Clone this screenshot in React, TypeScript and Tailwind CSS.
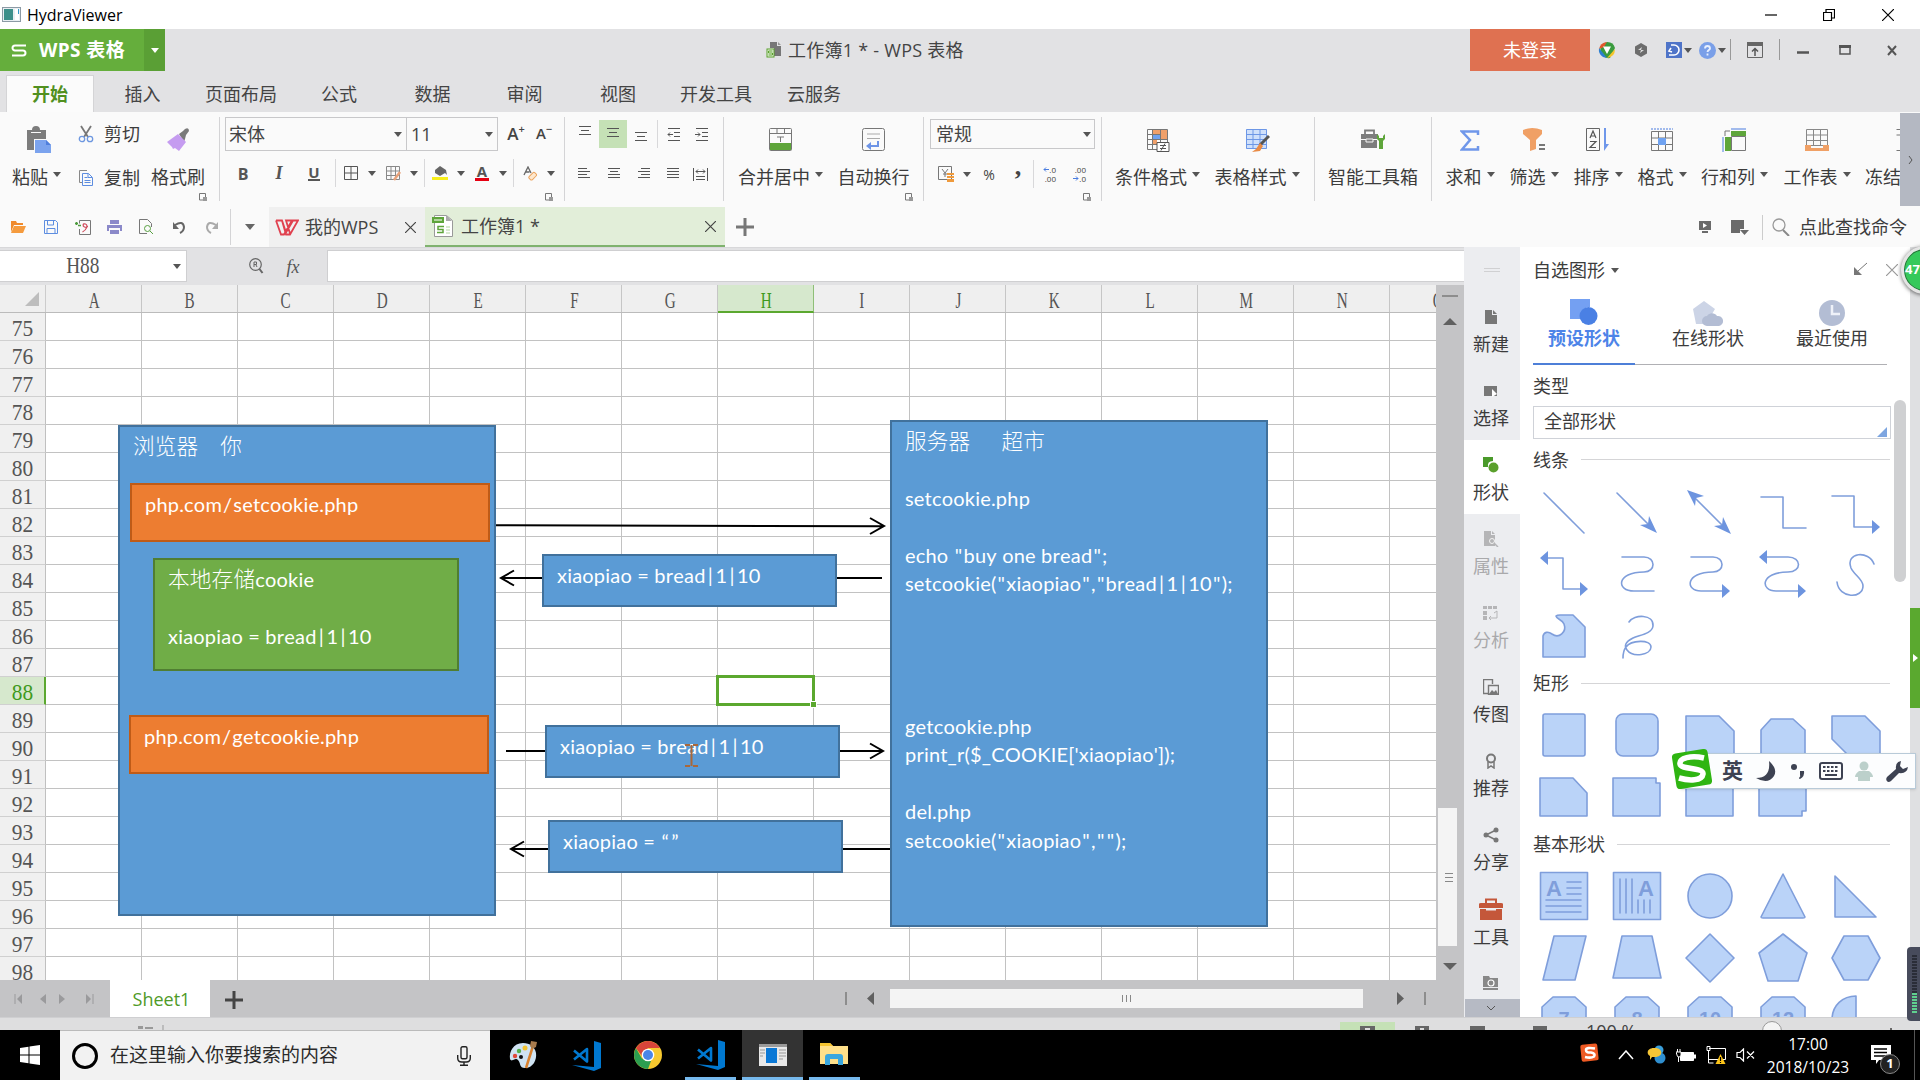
import React from "react";

type Kids = { children?: React.ReactNode };

const UI = "font-['Open_Sans','Noto_Sans_CJK_SC',sans-serif]";

/* ---------- helpers ---------- */

function Svg({ w, h, vb, className = "", children }: Kids & { w: number; h: number; vb?: string; className?: string }) {
  return (
    <svg width={w} height={h} viewBox={vb ?? `0 0 ${w} ${h}`} fill="none" className={`shrink-0 ${className}`}>
      {children}
    </svg>
  );
}

function Cell({ className = "", children }: Kids & { className?: string }) {
  return <div className={`flex h-full shrink-0 items-center justify-center ${className}`}>{children}</div>;
}

function Caret({ className = "text-[#555]" }: { className?: string }) {
  return (
    <Svg w={8} h={5} className={className}>
      <path d="M0 0h8L4 5z" fill="currentColor" />
    </Svg>
  );
}

function Sep() {
  return <div className="mt-[5px] h-[84px] w-px shrink-0 bg-[#d4d4d6]" />;
}

function Launcher() {
  return (
    <Svg w={8} h={8}>
      <path d="M4 7H.5V.5h6V4" stroke="#777" />
      <path d="M4 4h4v4H4z" fill="#999" />
    </Svg>
  );
}

function BigButton({ label, icon, caret, className = "" }: { label: string; icon: React.ReactNode; caret?: boolean; className?: string }) {
  return (
    <div className={`flex shrink-0 flex-col items-center ${className}`}>
      <div className="mt-[14px] flex h-7 items-center justify-center">{icon}</div>
      <div className="mt-[11px] flex h-6 items-center gap-[5px] text-lg leading-6 whitespace-nowrap text-[#3c3c3c]">
        {label}
        {caret && <span className="-mt-1.5"><Caret /></span>}
      </div>
    </div>
  );
}

/* ---------- window chrome ---------- */

function TitleBar() {
  return (
    <div className="flex h-[29px] items-center bg-white">
      <Svg w={19} h={15} className="ml-[2px]">
        <rect x=".5" y=".5" width="18" height="14" fill="#e9eef2" stroke="#8c9aa5" />
        <rect x="2" y="2" width="9" height="11" fill="#3d8f8a" />
        <rect x="13" y="2" width="4" height="11" fill="#fff" />
        <path d="M16.500 2v5" stroke="#39c" />
      </Svg>
      <span className="ml-[6px] flex-1 text-[16px] tracking-[0px] text-black">HydraViewer</span>
      <Cell className="w-[58px]"><Svg w={12} h={2}><path d="M0 1h12" stroke="#000" strokeWidth="1.200" /></Svg></Cell>
      <Cell className="w-[58px]">
        <Svg w={12} h={12}><path d="M.5 3.500h8v8h-8zM3 3V.5h8.500V9H9" stroke="#000" strokeWidth="1.200" /></Svg>
      </Cell>
      <Cell className="mr-[2px] w-[60px]"><Svg w={12} h={12}><path d="M0 0l12 12M12 0L0 12" stroke="#000" strokeWidth="1.200" /></Svg></Cell>
    </div>
  );
}

function BrandBar() {
  return (
    <div className="flex h-[42px] bg-[#e2e2e4]">
      <div className="flex w-[144px] items-center bg-[#65ae3c] text-white">
        <Svg w={16} h={13} className="ml-[11px]">
          <path d="M15 1.500H4a2.500 2.500 0 000 5h8a2.500 2.500 0 010 5H1" stroke="#fff" strokeWidth="2" />
        </Svg>
        <span className="ml-3 text-[19px] font-bold tracking-[0.4px] whitespace-nowrap">WPS 表格</span>
      </div>
      <div className="flex w-[21px] items-center justify-center bg-[#5a9f35]"><Caret className="text-white" /></div>
      <div className="flex flex-1 items-center pl-[601px] text-lg text-[#444]">
        <Svg w={16} h={16}>
          <path d="M4 0h7v4h4v10H8V6H4z" fill="#777" />
          <path d="M12 0l3 3h-3z" fill="#999" />
          <rect x="1" y="7" width="7" height="8" fill="#e8f4e0" stroke="#5aa02c" />
          <path d="M6.500 9h-4v2h4v2h-4" stroke="#5aa02c" />
        </Svg>
        <span className="ml-[6px] tracking-[0.25px] whitespace-nowrap">工作簿1 * - WPS 表格</span>
      </div>
      <div className="flex w-[120px] items-center justify-center bg-[#df7151] text-lg text-white">未登录</div>
      <Cell className="w-[34px]">
        <Svg w={18} h={18}>
          <path d="M9 1a8 8 0 018 6l-5 10A8 8 0 019 1z" fill="#3a9b3e" />
          <path d="M1 8q1-6 8-7L6 6z" fill="#e2582d" />
          <path d="M1 7l8 10-4-1Q0 13 1 7z" fill="#2b7fd0" />
          <path d="M9 17l8-9q0 8-8 9z" fill="#f4c52c" />
          <path d="M5 5.500h8L9 13z" fill="#fff" />
        </Svg>
      </Cell>
      <Cell className="w-[34px]">
        <Svg w={12} h={14}><path d="M6 0l6 3.500v7L6 14l-6-3.500v-7z" fill="#6d6d6d" /><path d="M3 7l4-3-1 3h3l-4 3 1-3z" fill="#ddd" /></Svg>
      </Cell>
      <Cell className="ml-[5px] w-[32px] gap-[2px]">
        <Svg w={16} h={16}>
          <rect width="16" height="16" fill="#4f74c8" />
          <path d="M5 3h3a5 5 0 010 10H3M5 6l-2 3 3 1" stroke="#fff" strokeWidth="1.600" />
        </Svg>
        <Caret />
      </Cell>
      <Cell className="w-[34px] gap-[2px]">
        <Svg w={17} h={17}>
          <circle cx="8.500" cy="8.500" r="8.500" fill="#7a9fe8" />
          <path d="M6 6.500a2.500 2.500 0 115 0c0 1.500-2.500 1.700-2.500 3.500M8.500 11.500v2" stroke="#e8f0ff" strokeWidth="1.800" />
        </Svg>
        <Caret />
      </Cell>
      <div className="mt-[10px] ml-[1px] h-[21px] w-px bg-[#999]" />
      <Cell className="w-[48px]">
        <Svg w={16} h={16}><path d="M.5.5h15v15H.5z" stroke="#666" /><path d="M0 0h16v4H0z" fill="#666" /><path d="M8 14V7M5 9.500l3-3 3 3" stroke="#555" strokeWidth="1.500" /></Svg>
      </Cell>
      <div className="mt-[10px] h-[21px] w-px bg-[#999]" />
      <Cell className="w-[46px]"><Svg w={12} h={3} className="mt-1"><path d="M0 1.500h12" stroke="#555" strokeWidth="2.500" /></Svg></Cell>
      <Cell className="w-[37px]"><Svg w={12} h={10}><path d="M1 1h10v8H1z" stroke="#555" strokeWidth="1.500" /><path d="M0 0h12v3H0z" fill="#555" /></Svg></Cell>
      <Cell className="w-[57px] pl-px"><Svg w={10} h={11}><path d="M1 1l8 9M9 1l-8 9" stroke="#555" strokeWidth="2" /></Svg></Cell>
    </div>
  );
}

function MenuTabs() {
  const tabs: [string, string][] = [
    ["插入", "w-[97px]"], ["页面布局", "w-[100px]"], ["公式", "w-[96px]"], ["数据", "w-[91px]"],
    ["审阅", "w-[93px]"], ["视图", "w-[94px]"], ["开发工具", "w-[102px]"], ["云服务", "w-[94px]"],
  ];
  return (
    <div className="flex h-[41px] bg-[#e2e2e4] pt-1 pl-[6px] text-lg text-[#444]">
      <div className="flex w-[88px] items-center justify-center border border-b-0 border-[#d4d4d6] bg-[#fbfbfb] font-bold text-[#51901f]">开始</div>
      {tabs.map(([t, w]) => (
        <div key={t} className={`flex items-center justify-center pt-px whitespace-nowrap ${w}`}>{t}</div>
      ))}
    </div>
  );
}

/* ---------- ribbon ---------- */

function Lines({ widths, align = "l", gap = 4 }: { widths: number[]; align?: "l" | "c" | "r"; gap?: number }) {
  const h = widths.length * gap;
  return (
    <Svg w={12} h={h}>
      {widths.map((w, i) => {
        const x = align === "l" ? 0 : align === "c" ? (12 - w) / 2 : 12 - w;
        return <path key={i} d={`M${x} ${i * gap + 0.5}h${w}`} stroke="#555" />;
      })}
    </Svg>
  );
}

function Indent({ right }: { right?: boolean }) {
  return (
    <Svg w={14} h={13}>
      <path d="M1 .5h12M7 4.500h6M7 8.500h6M1 12.500h12" stroke="#555" />
      <path d={right ? "M0 6.500h5M3 4.500l2 2-2 2" : "M6 6.500H1M3 4.500l-2 2 2 2"} stroke="#555" />
    </Svg>
  );
}

function PasteIcon() {
  return (
    <Svg w={24} h={28} className="ml-1">
      <path d="M0 4h5a4 4 0 018 0h6v9H7v11H0z" fill="#7c7c7c" />
      <path d="M4 6.500h10" stroke="#fafafa" />
      <path d="M8 14h11l5 5v8H8z" fill="#7ba3ee" />
      <path d="M19 14v5h5z" fill="#4f7fdd" />
    </Svg>
  );
}

function BrushIcon() {
  return (
    <Svg w={24} h={24}>
      <path d="M13 6l4-3 2-2q4-2 4 2l-3 4-1 4-1 3z" fill="#7a7a7a" />
      <path d="M12 6l8 8-7 9-4-3-2 1-1-2-5-5z" fill="#c59cf0" />
    </Svg>
  );
}

function TableIcon({ children }: Kids) {
  return (
    <Svg w={24} h={24}>
      <path d="M1.500 1.500h20v20h-20zM1.500 6.500h20M1.500 11.500h20M1.500 16.500h20M6.500 1.500v20M14.500 1.500v20" stroke="#777" />
      {children}
    </Svg>
  );
}

function Ribbon() {
  return (
    <div className="flex h-[92px] bg-[#fafafa]">
      {/* clipboard */}
      <div className="flex w-[219px] shrink-0">
        <BigButton className="w-[72px] pl-px" label="粘贴" caret icon={<PasteIcon />} />
        <div className="w-[72px] pt-2 text-lg text-[#3c3c3c]">
          <div className="flex h-7 items-center pl-[6px]">
            <Svg w={16} h={18}>
              <path d="M3 1l7 11M13 1L6 12" stroke="#777" strokeWidth="1.800" />
              <circle cx="4" cy="14" r="2.700" stroke="#6d97e0" strokeWidth="1.300" />
              <circle cx="12" cy="14" r="2.700" stroke="#6d97e0" strokeWidth="1.300" />
            </Svg>
            <span className="ml-[10px] whitespace-nowrap">剪切</span>
          </div>
          <div className="mt-[16px] flex h-7 items-center pl-[6px]">
            <Svg w={16} h={18}>
              <path d="M9 1.500H1.500v12H4" stroke="#888" />
              <path d="M4.500 4.500h6l4 4v8h-10zM10 4.500v4h4M6.500 8.500h3M6.500 11.500h6M6.500 13.500h6" stroke="#5d8de0" />
            </Svg>
            <span className="ml-[10px] whitespace-nowrap">复制</span>
          </div>
        </div>
        <div className="w-[75px]">
          <BigButton className="w-[68px]" label="格式刷" icon={<BrushIcon />} />
          <div className="mt-1 flex justify-end pr-3"><Launcher /></div>
        </div>
      </div>
      <Sep />
      {/* font */}
      <div className="w-[344px] shrink-0 pt-[5px]">
        <div className="flex h-[34px] pl-[5px] text-lg text-[#444]">
          <div className="flex w-[182px] items-center justify-between border border-[#c8c8ca] pr-1 pl-[3px]">宋体<Caret /></div>
          <div className="-ml-px flex w-[92px] items-center justify-between border border-[#c8c8ca] pr-1 pl-1">11<Caret /></div>
          <Cell className="ml-[4px] w-7 items-center text-[17px] font-semibold">A<sup className="text-[11px]">+</sup></Cell>
          <Cell className="w-7 text-[15px] font-semibold">A<sup className="text-[11px]">−</sup></Cell>
        </div>
        <div className="mt-[8px] flex h-7 items-center pl-[5px] text-[#555]">
          <Cell className="w-9 pt-px text-[16px] font-bold">B</Cell>
          <Cell className="w-9 pt-px font-['Liberation_Serif',serif] text-[18px] font-bold italic">I</Cell>
          <Cell className="w-[34px] text-[15px] font-bold"><span className="border-b-2 border-[#555] leading-[14px]">U</span></Cell>
          <div className="ml-1 h-full w-px bg-[#d8d8da]" />
          <Cell className="w-[30px]"><Svg w={14} h={14}><path d="M.5.5h13v13H.5zM7 0v14M0 7h14" stroke="#555" /></Svg></Cell>
          <Cell className="w-3"><Caret /></Cell>
          <Cell className="w-[30px]">
            <Svg w={15} h={15}>
              <path d="M.5.5h13v13H.5zM5 0v14M9.500 0v14M0 5h14M0 9.500h14" stroke="#888" />
              <path d="M14 6l-6 8" stroke="#e8a27a" strokeWidth="2.500" />
            </Svg>
          </Cell>
          <Cell className="w-3"><Caret /></Cell>
          <div className="ml-1 h-full w-px bg-[#d8d8da]" />
          <Cell className="w-[30px]">
            <Svg w={17} h={16}>
              <path d="M3 5l5-4 6 4 1 5-2-2-5 3-5-3z" fill="#666" />
              <path d="M0 12h16v3H0z" fill="#f7ee1b" />
            </Svg>
          </Cell>
          <Cell className="w-3"><Caret /></Cell>
          <Cell className="w-[30px]"><span className="border-b-[3px] border-[#e60012] px-[2px] text-[15px] leading-[13px] font-bold">A</span></Cell>
          <Cell className="w-3"><Caret /></Cell>
          <div className="ml-1 h-full w-px bg-[#d8d8da]" />
          <Cell className="w-8">
            <Svg w={15} h={15}>
              <path d="M1 9l4-8 3 6M2.500 6h4" stroke="#666" strokeWidth="1.300" />
              <rect x="5.500" y="8" width="8" height="4.500" rx="1.500" transform="rotate(-45 9.500 10)" fill="#fde8cf" stroke="#eca35c" />
            </Svg>
          </Cell>
          <Cell className="w-[10px]"><Caret /></Cell>
        </div>
        <div className="mt-[6px] flex justify-end pr-[11px]"><Launcher /></div>
      </div>
      <Sep />
      {/* alignment */}
      <div className="w-[158px] shrink-0 pt-2">
        <div className="flex h-7 pl-[6px]">
          <Cell className="w-7 pb-1"><Lines widths={[12, 8, 12]} align="c" /></Cell>
          <Cell className="w-7 bg-[#c5e1b6]"><Lines widths={[12, 8, 12]} align="c" /></Cell>
          <Cell className="w-7 pt-2"><Lines widths={[12, 8, 12]} align="c" /></Cell>
          <div className="ml-[2px] h-full w-px bg-[#d8d8da]" />
          <Cell className="w-8"><Indent /></Cell>
          <Cell className="w-6"><Indent right /></Cell>
        </div>
        <div className="mt-3 flex h-7 pl-1">
          <Cell className="w-[30px]"><Lines widths={[9, 12, 9, 12]} gap={3} /></Cell>
          <Cell className="w-[30px]"><Lines widths={[12, 8, 12, 12]} gap={3} align="c" /></Cell>
          <Cell className="w-[30px]"><Lines widths={[9, 12, 9, 12]} gap={3} align="r" /></Cell>
          <Cell className="w-7"><Lines widths={[12, 12, 12, 12]} gap={3} /></Cell>
          <Cell className="w-[30px] pr-[3px]">
            <Svg w={15} h={13}><path d="M.5 0v13M14.500 0v13M3 3.500h9M5 1.500l-2 2 2 2M10 1.500l2 2-2 2M3 8.500h9M3 11.500h9" stroke="#555" /></Svg>
          </Cell>
        </div>
      </div>
      <Sep />
      {/* merge & wrap */}
      <div className="w-[199px] shrink-0">
        <div className="flex pl-2">
          <BigButton
            className="w-24 pl-px"
            label="合并居中"
            caret
            icon={
              <Svg w={24} h={24}>
                <rect x=".5" y=".5" width="22" height="22" rx="1" stroke="#777" />
                <path d="M0 5.500h23M8 0v5M15.500 0v5M8 9h7M11.500 9v5" stroke="#777" />
                <path d="M1 15h21v7H1z" fill="#5ea53a" />
              </Svg>
            }
          />
          <BigButton
            className="w-[91px]"
            label="自动换行"
            icon={
              <Svg w={24} h={24}>
                <rect x=".5" y=".5" width="22" height="22" rx="2" stroke="#777" />
                <path d="M5 6h13M5 10.500h13" stroke="#aaa" />
                <path d="M16 13v5H7" stroke="#6d94e6" strokeWidth="2" />
                <path d="M9 14v8l-5-4z" fill="#6d94e6" />
              </Svg>
            }
          />
        </div>
        <div className="mt-1 flex justify-end pr-[10px]"><Launcher /></div>
      </div>
      <Sep />
      {/* number */}
      <div className="w-[177px] shrink-0 pt-[7px]">
        <div className="ml-[6px] flex h-[30px] w-[165px] items-center justify-between border border-[#c8c8ca] pr-[3px] pl-[5px] text-lg text-[#444]">常规<Caret /></div>
        <div className="mt-[11px] flex h-7 pl-[6px] text-[#444]">
          <Cell className="w-8">
            <Svg w={17} h={16}>
              <path d="M.5.5h13v13H.5z" stroke="#777" />
              <path d="M4 3l3 4 3-4M7 7v4M5 8h4" stroke="#777" />
              <path d="M9 7h7v2H9zM9 10h7v2H9zM9 13h7v3H9z" fill="#ef9a3c" />
            </Svg>
          </Cell>
          <Cell className="w-[10px]"><Caret /></Cell>
          <Cell className="ml-[2px] w-[30px] text-[14px]">%</Cell>
          <Cell className="w-7 pb-4 font-['Liberation_Serif',serif] text-[26px] font-bold">,</Cell>
          <div className="ml-px h-full w-px bg-[#d8d8da]" />
          <Cell className="w-[30px] flex-col items-end pr-[8px] text-[8px] leading-[9px]">
            <span className="flex items-center"><Svg w={6} h={5}><path d="M6 2.500H1M3 .5l-2 2 2 2" stroke="#4a7de0" /></Svg>.0</span>
            <span>.00</span>
          </Cell>
          <Cell className="w-[30px] flex-col items-end pr-[8px] text-[8px] leading-[9px]">
            <span>.00</span>
            <span className="flex items-center"><Svg w={6} h={5}><path d="M0 2.500h5M3 .5l2 2-2 2" stroke="#4a7de0" /></Svg>.0</span>
          </Cell>
        </div>
        <div className="mt-[5px] flex justify-end pr-[10px]"><Launcher /></div>
      </div>
      <Sep />
      {/* styles */}
      <div className="flex w-[212px] shrink-0 pl-[5px]">
        <BigButton
          className="w-[100px] pl-px"
          label="条件格式"
          caret
          icon={
            <TableIcon>
              <path d="M7 2h7v4H7zM7 12h4v4H7z" fill="#f0a06a" />
              <path d="M15 2h6v9h-6z" fill="#f0a06a" />
              <path d="M7 7h7v4H7z" fill="#6fa2f0" />
              <path d="M11 14.500h12v9H11z" fill="#fff" stroke="#555" />
              <path d="M14 17.500h6M14 20.500h6M19 15.500l-4 7" stroke="#555" />
            </TableIcon>
          }
        />
        <BigButton
          className="w-[100px]"
          label="表格样式"
          caret
          icon={
            <Svg w={25} h={24}>
              <path d="M1 1h21v20H1z" fill="#cfe0fb" />
              <path d="M1.500 1.500h20v19h-20zM1.500 6.500h20M1.500 11.500h20M1.500 16.500h20M8 1.500v19M15 1.500v19" stroke="#6d97e6" />
              <path d="M24 8l-9 9" stroke="#555" strokeWidth="3" />
              <path d="M15 15l3 3-3 5-8 1 4-3z" fill="#e98b45" />
            </Svg>
          }
        />
      </div>
      <Sep />
      <BigButton
        className="w-[116px]"
        label="智能工具箱"
        icon={
          <Svg w={25} h={24}>
            <path d="M4 6V2.500h9V6" stroke="#7d7d7d" strokeWidth="1.800" />
            <path d="M0 6h17v5H0zM0 12h16v8H0z" fill="#7d7d7d" />
            <path d="M5 11h7v3H5z" fill="#7d7d7d" stroke="#fafafa" />
            <path d="M16 6v5l2 2v8h4v-8l2-2V6l-2 2v2h-4V8z" fill="#5ea53a" />
          </Svg>
        }
      />
      <Sep />
      {/* data */}
      <div className="flex min-w-0 flex-1 overflow-hidden pl-[6px]">
        <BigButton className="w-16" label="求和" caret icon={<Svg w={20} h={21}><path d="M18 5V1.500H2L10 10 2 19.500h16V16" stroke="#6f97ea" strokeWidth="2.500" /></Svg>} />
        <BigButton
          className="w-16"
          label="筛选"
          caret
          icon={<Svg w={23} h={24}><path d="M0 2q9-4 19 0v4l-6 6v9l-6 2V12L0 6z" fill="#f0a065" /><path d="M16 17h6M16 21h6" stroke="#777" strokeWidth="2" /></Svg>}
        />
        <BigButton
          className="w-16"
          label="排序"
          caret
          icon={
            <Svg w={24} h={24}>
              <path d="M.5.5h13v22H.5z" stroke="#666" />
              <path d="M4 10l3-7 3 7M5 8h4M4 13.500h6l-6 6h6" stroke="#555" strokeWidth="1.200" />
              <path d="M19 0v18" stroke="#6f97ea" strokeWidth="2" /><path d="M18 16h5l-5 7z" fill="#6f97ea" />
            </Svg>
          }
        />
        <BigButton
          className="w-16"
          label="格式"
          caret
          icon={
            <Svg w={22} h={24}>
              <path d="M0 1h22" stroke="#4a7de0" strokeDasharray="2 1" />
              <path d="M.5 3.500h21v19H.5zM.5 10h21M.5 16.500h21M7.500 3.500v19M14.500 3.500v19" stroke="#777" />
              <path d="M7 10h8v7H7z" fill="#6fa2f0" />
            </Svg>
          }
        />
        <BigButton
          className="w-[81px]"
          label="行和列"
          caret
          icon={
            <Svg w={25} h={24}>
              <path d="M9 1h15M1 9v15" stroke="#4a7de0" /><path d="M9 3h15v5H9zM3 9h6v14H3z" fill="#5ea53a" />
              <path d="M9.500 8.500h14v14h-14z" stroke="#777" /><path d="M3 8V3h5" stroke="#777" />
            </Svg>
          }
        />
        <BigButton
          className="w-[84px]"
          label="工作表"
          caret
          icon={
            <Svg w={24} h={24}>
              <path d="M1.500 1.500h21v16h-21zM1.500 7h21M1.500 12.500h21M8.500 1.500v16M15.500 1.500v16" stroke="#888" />
              <path d="M0 17h6v3h12v-3h6v6H0z" fill="#f0a065" />
            </Svg>
          }
        />
        <BigButton
          className="ml-[6px] w-[72px]"
          label="冻结窗格"
          icon={<Svg w={24} h={24}><path d="M7.500 1.500h16v21h-16M7.500 7h16" stroke="#777" /></Svg>}
        />
      </div>
      <div className="mt-px -mb-[2px] flex w-5 shrink-0 items-center justify-center bg-[#b4b8c2] text-[#555]">
        <Svg w={5} h={8}><path d="M1 0l3 4-3 4" stroke="#555" /></Svg>
      </div>
    </div>
  );
}

/* ---------- document tabs ---------- */

function X({ s = 11, c = "#444" }: { s?: number; c?: string }) {
  return <Svg w={s} h={s}><path d={`M0 0l${s} ${s}M${s} 0L0 ${s}`} stroke={c} strokeWidth="1.200" /></Svg>;
}

function DocTabs() {
  return (
    <div className="flex h-[43px] items-center bg-[#fafafa] pt-[3px]">
      <Cell className="ml-[2px] w-8"><Svg w={16} h={12}><path d="M1 0h5l1 2h6v2H4L1 11z" fill="#f08a2c" /><path d="M4 5h12l-3 7H1z" fill="#f59b3e" /></Svg></Cell>
      <Cell className="w-[34px]"><Svg w={14} h={14}><path d="M.5.5h11l2 2v11H.5z" stroke="#5d8de0" /><path d="M3.500 1v4h6V1M3 13.500v-5h8v5" stroke="#5d8de0" /></Svg></Cell>
      <Cell className="w-[30px]">
        <Svg w={16} h={15}><path d="M4.500 3.500v-3h11v14h-11V9" stroke="#777" /><path d="M7.500 12c4-2 6-7 3-8s-3 2-1 3c3 1 3-1 3-1" stroke="#d04a5a" strokeWidth="1.200" /><path d="M0 3.500h3M1.500 2v3" stroke="#4c9a3c" strokeWidth="1.500" /><path d="M3 5.500h3" stroke="#4c9a3c" strokeWidth="1.500" /></Svg>
      </Cell>
      <Cell className="w-[32px]"><Svg w={15} h={14}><path d="M3 0h9v4H3zM0 5h15v6h-2V8H2v3H0zM3 10h9v4H3z" fill="#8b89c9" /></Svg></Cell>
      <Cell className="w-[33px]"><Svg w={15} h={16}><path d="M8 14.500H.5V.5h8l4 4V8" stroke="#777" /><circle cx="8.500" cy="9.500" r="3" stroke="#57a040" /><path d="M11 12l3 3" stroke="#57a040" /></Svg></Cell>
      <Cell className="w-8"><Svg w={13} h={13}><path d="M2 4q8-5 9 2 0 4-4 6" stroke="#666" strokeWidth="2" /><path d="M0 1v7h6z" fill="#666" /></Svg></Cell>
      <Cell className="w-8"><Svg w={13} h={13}><path d="M11 4Q3-1 2 6q0 4 4 6" stroke="#aaa" strokeWidth="2" /><path d="M13 1v7H7z" fill="#aaa" /></Svg></Cell>
      <div className="ml-[3px] h-9 w-px bg-[#d4d4d6]" />
      <Cell className="w-[38px]"><Svg w={10} h={6}><path d="M0 0h10L5 6z" fill="#666" /></Svg></Cell>
      <div className="flex h-full w-[156px] items-center bg-[#f0f0f0] pl-[6px] text-lg text-[#444]">
        <Svg w={24} h={17}>
          <path d="M1 1.500h6l4 12 7-12h5l-8 14h-4L7 1.500M1 1.500l5 14h3L17 1.500h-6l4 13" stroke="#e0414f" strokeWidth="1.800" />
        </Svg>
        <span className="ml-[6px] flex-1 whitespace-nowrap">我的WPS</span>
        <span className="mr-[9px]"><X /></span>
      </div>
      <div className="flex h-full w-[300px] items-center border-b-2 border-[#7fb26e] bg-[#e2eed9] pl-[7px] text-lg text-[#444]">
        <Svg w={21} h={22}>
          <path d="M2.500.5h12l6 5v16h-18z" fill="#fff" stroke="#999" />
          <path d="M14 0v6h6z" fill="#aaa" />
          <path d="M0 2h12v6H0z" fill="#5ea53a" />
          <path d="M2 5h8M14 12h4M14 15h4M14 18h4" stroke="#cde5c0" strokeWidth="1.500" />
          <path d="M12 11.500H6v3h5v3H5" stroke="#5ea53a" strokeWidth="1.500" />
        </Svg>
        <span className="ml-2 flex-1">工作簿1 *</span>
        <span className="mr-[9px]"><X /></span>
      </div>
      <Cell className="w-10"><Svg w={18} h={18}><path d="M9 0v18M0 9h18" stroke="#777" strokeWidth="3" /></Svg></Cell>
      <div className="flex-1" />
      <Cell className="w-[34px]"><Svg w={12} h={12}><path d="M0 0h12v9H0z" fill="#6a6a6a" /><path d="M4 2l4 2.500L4 7z" fill="#fff" /><path d="M3 11h6" stroke="#6a6a6a" strokeWidth="2" /></Svg></Cell>
      <Cell className="w-[36px]"><Svg w={18} h={15}><path d="M0 0h13v9H9v4H0z" fill="#6a6a6a" /><path d="M9 10h9l-4.500 5z" fill="#6a6a6a" /></Svg></Cell>
      <div className="ml-1 h-[25px] w-px bg-[#ccc]" />
      <Cell className="w-9"><Svg w={18} h={18}><circle cx="7" cy="7" r="6" stroke="#999" strokeWidth="1.300" /><path d="M11 12l6 6" stroke="#888" strokeWidth="2" /></Svg></Cell>
      <span className="mr-[13px] text-lg text-[#3c3c3c]">点此查找命令</span>
    </div>
  );
}

/* ---------- sheet ---------- */

const COLS = "ABCDEFGHIJKLMNO".split("");
const ROWS = Array.from({ length: 24 }, (_, i) => 75 + i);

function FormulaBar() {
  return (
    <div className="flex h-[38px] items-start border-t border-[#d8d8da] bg-[#e2e2e4] pt-[2px]">
      <div className="flex h-[32px] w-[187px] items-center border border-l-0 border-[#cfcfd1] bg-white">
        <div className="flex flex-1 justify-center pr-[2px] pt-px">
          <span className="inline-block scale-x-[0.84] font-['Liberation_Serif',serif] text-[23px] text-[#555]">H88</span>
        </div>
        <Cell className="w-[19px]"><Caret /></Cell>
      </div>
      <Cell className="ml-[49px] w-[40px]"><Svg w={15} h={16} className="-mt-1"><circle cx="6.500" cy="6.500" r="5.800" stroke="#666" strokeWidth="1.200" /><path d="M5 9V4h2.500v2.500H5M7 7l1 2" stroke="#666" /><path d="M10.500 11l3 4" stroke="#666" strokeWidth="2" /></Svg></Cell>
      <Cell className="w-[34px] font-['Liberation_Serif',serif] text-[18px] text-[#555] italic">fx</Cell>
      <div className="ml-[17px] h-[32px] flex-1 border-y border-l border-[#cfcfd1] bg-white" />
    </div>
  );
}

function Box({ className, children }: Kids & { className: string }) {
  return <div className={`absolute border-2 whitespace-pre text-white ${className}`}>{children}</div>;
}

/* Code text with a little extra room around pipes, quotes and slashes. */
function Code({ text }: { text: string }) {
  return (
    <>
      {text.split(/([|"“”/])/).map((part, i) =>
        part === "|" ? (
          <span key={i} className="px-[2.300px]">|</span>
        ) : part === "/" ? (
          <span key={i} className="pr-[1px] pl-[1px]">/</span>
        ) : /^["“”]$/.test(part) ? (
          <span key={i} className="px-[1.100px]">{part}</span>
        ) : (
          part
        ),
      )}
    </>
  );
}

const BLUE = "bg-[#5b9bd5] border-[#41719c]";
const ORANGE = "bg-[#ed7d31] border-[#bf5b17]";

function Drawing() {
  return (
    <div className="font-['Lato','Noto_Sans_CJK_SC',sans-serif] text-[20px] leading-[28.500px] font-normal tracking-[0.2px] tabular-nums [font-kerning:none] [font-variant-ligatures:none]">
      <Box className={`top-[112px] left-[72px] h-[491px] w-[378px] ${BLUE}`}>
        <div className="pt-[5px] pl-[13px] text-[21.600px] font-light">浏览器　你</div>
      </Box>
      <Box className={`top-[170px] left-[84px] h-[59px] w-[360px] pt-[5px] pl-[13px] ${ORANGE}`}><Code text="php.com/setcookie.php" /></Box>
      <Box className="top-[245px] left-[107px] h-[113px] w-[306px] border-[#507e32] bg-[#70ad47] pt-[5px] pl-[13px]">
        <div><span className="text-[21.600px] font-light">本地存储</span>cookie</div>
        <div className="pt-[28.500px]"><Code text="xiaopiao = bread|1|10" /></div>
      </Box>
      <Box className={`top-[402px] left-[83px] h-[59px] w-[360px] pt-[5px] pl-[13px] ${ORANGE}`}><Code text="php.com/getcookie.php" /></Box>
      <Box className={`top-[241px] left-[496px] h-[53px] w-[295px] pt-[5px] pl-[13px] ${BLUE}`}><Code text="xiaopiao = bread|1|10" /></Box>
      <Box className={`top-[412px] left-[499px] h-[53px] w-[295px] pt-[5px] pl-[13px] ${BLUE}`}><Code text="xiaopiao = bread|1|10" /></Box>
      <Box className={`top-[507px] left-[502px] h-[53px] w-[295px] pt-[5px] pl-[13px] ${BLUE}`}><Code text="xiaopiao = “”" /></Box>
      <Box className={`top-[107px] left-[844px] h-[507px] w-[378px] pt-[5px] pl-[13px] ${BLUE}`}>
        <div className="text-[21.600px] font-light">服务器<span className="pl-[31px]">超市</span></div>
        <div className="pt-[28px]">setcookie.php</div>
        <div className="pt-[28.500px]"><Code text={'echo "buy one bread";'} /></div>
        <div><Code text={'setcookie("xiaopiao","bread|1|10");'} /></div>
        <div className="pt-[114px]">getcookie.php</div>
        <div>{"print_r($_COOKIE['xiaopiao']);"}</div>
        <div className="pt-[28.500px]">del.php</div>
        <div><Code text={'setcookie("xiaopiao","");'} /></div>
      </Box>
      <svg className="absolute top-0 left-0" width="1390" height="667" fill="none" stroke="#000" strokeWidth="2">
        <path d="M450 212.300L838 213.300M824 205l14 8-14 8" />
        <path d="M496 265h-41M468 257.500l-13 7.500 13 7.500M791 265h45" />
        <path d="M460 438h39M794 438h43M824 430.500l13 7.500-13 7.500" />
        <path d="M502 536h-37M478 528.500l-13 7.500 13 7.500M797 536h47" />
        <path d="M639 432h5M647 432h5M639 453h5M647 453h5M645.500 432v21" stroke="#a9683a" />
      </svg>
      <div className="absolute top-[362px] left-[670px] h-[31px] w-[99px] border-[3px] border-[#5ba82f]">
        <div className="absolute -right-[5px] -bottom-[5px] box-content h-[5px] w-[5px] border border-white bg-[#5ba82f]" />
      </div>
    </div>
  );
}

function Sheet() {
  return (
    <div className="flex h-[695px] w-[1464px]">
      <div className="w-[1436px] shrink-0 overflow-hidden bg-white">
        <div className="flex h-7 w-[1600px] border-b border-[#bbb] bg-[#efefef] font-['Liberation_Serif',serif] text-[23px] leading-7 text-[#555]">
          <div className="flex w-[46px] shrink-0 items-end justify-end border-r border-[#ccc] pr-[6px] pb-[6px]">
            <Svg w={14} h={14}><path d="M14 0v14H0z" fill="#bdbdbd" /></Svg>
          </div>
          {COLS.map((c) => (
            <div
              key={c}
              className={`flex w-24 shrink-0 items-center justify-center border-r pl-px ${
                c === "H" ? "-mb-px h-7 border-b-2 border-[#8fbf78] border-b-[#5ba82f] bg-[#d6e8cd] pt-[6px] text-[#3f9a1c]" : "border-[#c6c6c6] pt-[5px]"
              }`}
            >
              <span className="inline-block scale-x-[0.66]">{c}</span>
            </div>
          ))}
        </div>
        <div className="flex h-[667px] overflow-hidden">
          <div className="w-[46px] shrink-0 font-['Liberation_Serif',serif] text-[23px] leading-6 text-[#555]">
            {ROWS.map((r) => (
              <div
                key={r}
                className={`flex h-7 items-center justify-center border-b border-[#d0d0d0] pt-[5px] ${
                  r === 88 ? "border-r-2 border-r-[#5ba82f] bg-[#d6e8cd] text-[#3f9a1c]" : "border-r border-r-[#c0c0c0] bg-[#f0f0f0]"
                }`}
              >
                <span className="inline-block scale-x-[0.93]">{r}</span>
              </div>
            ))}
          </div>
          <div className="relative w-[1390px] shrink-0 overflow-hidden">
            <div className="grid w-[1440px] grid-cols-[repeat(15,96px)]">
              {ROWS.flatMap((r) => COLS.map((c) => <div key={c + r} className="h-7 border-r border-b border-[#c2c2c2]" />))}
            </div>
            <Drawing />
          </div>
        </div>
      </div>
      <div className="flex w-7 flex-col items-center bg-[#c4c4c6]">
        <div className="mt-[10px] h-[2px] w-4 bg-[#8d8d8d]" />
        <Svg w={14} h={7} className="mt-[21px]"><path d="M0 7l7-7 7 7z" fill="#606060" /></Svg>
        <div className="mt-[483px] mr-[5px] flex h-[138px] w-[19px] flex-col items-center justify-center gap-[3px] bg-[#f4f4f4] pl-[2px]">
          <div className="h-px w-2 bg-[#888]" /><div className="h-px w-2 bg-[#888]" /><div className="h-px w-2 bg-[#888]" />
        </div>
        <Svg w={14} h={7} className="mt-[17px]"><path d="M0 0l7 7 7-7z" fill="#606060" /></Svg>
      </div>
    </div>
  );
}

function SheetTabs() {
  return (
    <div className="flex h-[37px] w-[1464px] items-center bg-[#c4c4c6]">
      <div className="flex w-[110px] items-center text-[#9a9a9c]">
        <Svg w={8} h={10} className="ml-[14px]"><path d="M1 0v10" stroke="currentColor" /><path d="M8 0v10L3 5z" fill="currentColor" /></Svg>
        <Svg w={6} h={10} className="ml-[18px]"><path d="M6 0v10L0 5z" fill="currentColor" /></Svg>
        <Svg w={6} h={10} className="ml-[13px]"><path d="M0 0v10l6-5z" fill="currentColor" /></Svg>
        <Svg w={8} h={10} className="ml-[21px]"><path d="M7 0v10" stroke="currentColor" /><path d="M0 0v10l5-5z" fill="currentColor" /></Svg>
      </div>
      <div className="flex h-full w-[100px] items-center justify-center bg-white pt-px pl-[3px] text-[18px] text-[#4f9a28]">Sheet1</div>
      <Cell className="w-[48px]"><Svg w={18} h={18} className="mt-[2px]"><path d="M9 0v18M0 9h18" stroke="#444" strokeWidth="3" /></Svg></Cell>
      <div className="ml-[587px] h-[13px] w-[2px] bg-[#8d8d8d]" />
      <Svg w={7} h={13} className="ml-[20px]"><path d="M7 0v13L0 6.500z" fill="#606060" /></Svg>
      <div className="ml-[16px] flex h-[19px] w-[473px] items-center justify-center gap-[3px] bg-[#f4f4f4]">
        <div className="h-[7px] w-px bg-[#888]" /><div className="h-[7px] w-px bg-[#888]" /><div className="h-[7px] w-px bg-[#888]" />
      </div>
      <Svg w={7} h={13} className="ml-[34px]"><path d="M0 0v13l7-6.500z" fill="#606060" /></Svg>
      <div className="ml-[20px] h-[13px] w-[2px] bg-[#8d8d8d]" />
    </div>
  );
}

/* ---------- task-pane rail ---------- */

const RAIL: { label: string; tone?: "on" | "off"; icon: React.ReactNode }[] = [
  { label: "新建", icon: <path d="M2 1h7v5h5v9H2zM10 1l4 4h-4z" fill="#777" /> },
  { label: "选择", icon: <><path d="M1 3h13v10H1z" fill="#777" /><path d="M9 6v8l5-3z" fill="#fff" /></> },
  { label: "形状", tone: "on", icon: <><path d="M0 0h10v4q-6 0-5 6H0z" fill="#4a9a2a" /><circle cx="10.500" cy="10.500" r="5" fill="#5aa02c" /></> },
  { label: "属性", tone: "off", icon: <><path d="M1 0h7v4h4v11H1zM9 0l3 3H9z" fill="#b5b5b7" /><circle cx="9" cy="10" r="2.500" stroke="#f4f4f4" /><path d="M11 12l4 4" stroke="#b5b5b7" strokeWidth="1.500" /></> },
  { label: "分析", tone: "off", icon: <><path d="M0 1h4v3H0zM5 1h4v3H5zM10 1h4v3h-4zM0 6h4v4H0zM0 11h4v4H0z" fill="#b5b5b7" /><path d="M14 6v7H6M11 8l3-2M8 11l-2 2 2 2" stroke="#b5b5b7" /></> },
  { label: "传图", icon: <><path d="M5 14.500H.5V.5h9V5" stroke="#777" strokeWidth="1.400" /><path d="M5.500 6.500h10v9h-10z" stroke="#777" strokeWidth="1.400" /><path d="M6 15l3-4 2 2 2-2 2 4z" fill="#777" /></> },
  { label: "推荐", icon: <><circle cx="8" cy="5.500" r="4" stroke="#777" strokeWidth="2" /><path d="M5 9v6l3-2 3 2V9" stroke="#777" strokeWidth="1.500" /></> },
  { label: "分享", icon: <><path d="M13 3L3 8l10 5" stroke="#777" strokeWidth="1.500" /><circle cx="13" cy="3" r="2.500" fill="#777" /><circle cx="3" cy="8" r="2.500" fill="#777" /><circle cx="13" cy="13" r="2.500" fill="#777" /></> },
];

function Rail() {
  return (
    <div className="flex w-14 shrink-0 flex-col overflow-hidden bg-[#ecedf0] text-lg text-[#3c3c3c]">
      <div className="mx-auto mt-[21px] mb-5 h-[4px] w-4 border-y border-[#d0d0d2]" />
      {RAIL.map((r) => (
        <div
          key={r.label}
          className={`flex h-[74px] shrink-0 flex-col items-center pt-[17px] ${
            r.tone === "on" ? "bg-white" : r.tone === "off" ? "text-[#a9a9ab]" : ""
          }`}
        >
          <Svg w={16} h={16} className="mr-[3px]">{r.icon}</Svg>
          <span className="mt-[7px] mr-[2px] leading-6">{r.label}</span>
        </div>
      ))}
      <div className="flex h-[75px] shrink-0 flex-col items-center pt-[14px]">
        <Svg w={24} h={22} className="mr-[3px]"><path d="M0 6q0-1 2-1h20q2 0 2 1v4H0zM1 11h22v11H1z" fill="#c4573a" /><path d="M7 5V1.500h10V5" stroke="#c4573a" strokeWidth="2" /><path d="M7 10.500h10v2H7z" fill="#ecedf0" /></Svg>
        <span className="mt-[5px] mr-[2px] leading-6">工具</span>
      </div>
      <div className="flex flex-1 items-center justify-center pt-2 pr-[4px]">
        <Svg w={15} h={14}><path d="M0 0h6l1 2h8v9H0zM0 12h15v2H0z" fill="#888" /><circle cx="8" cy="7" r="3" stroke="#fff" strokeWidth="1.200" /></Svg>
      </div>
      <div className="ml-px flex h-[18px] items-center justify-center bg-[#b6bac4] pr-[3px]"><Svg w={8} h={5}><path d="M0 0l4 4 4-4" stroke="#555" /></Svg></div>
    </div>
  );
}

/* ---------- shapes pane ---------- */

function S({ children, fill = true }: Kids & { fill?: boolean }) {
  return (
    <div className="flex h-[62px] w-[73px] shrink-0 items-center justify-center">
      <svg width="50" height="50" viewBox="0 0 50 50" fill={fill ? "#bad3f8" : "none"} stroke="#7f9edb" strokeWidth={1.6} strokeLinejoin="round" strokeLinecap="round">
        {children}
      </svg>
    </div>
  );
}

function Arrow({ d }: { d: string }) {
  return <path d={d} fill="#6d94df" stroke="none" />;
}

function Num({ children }: Kids) {
  return (
    <S>
      <path d="M14 2h22l11 10v24L36 47H14L3 36V12z" />
      <text x="25" y="31" textAnchor="middle" fontSize="20" fontWeight="700" fill="#7f9edb" stroke="none" fontFamily="Liberation Sans">{children}</text>
    </S>
  );
}

function SectionHead({ label, className }: { label: string; className: string }) {
  return (
    <div className={`flex items-center gap-3 pl-[13px] text-lg text-[#3c3c3c] ${className}`}>
      <span className="whitespace-nowrap">{label}</span>
      <div className="mr-5 h-px flex-1 bg-[#d5d5d7]" />
    </div>
  );
}

const ROW = "flex shrink-0 pl-[7px]";

function ShapesPane() {
  return (
    <div className="flex w-[390px] min-w-0 shrink-0 flex-col overflow-hidden bg-white text-lg text-[#3c3c3c]">
      <div className="flex h-[46px] shrink-0 items-center pl-[13px]">
        自选图形
        <span className="ml-[6px]"><Caret /></span>
        <div className="flex-1" />
        <Svg w={13} h={14} className="-mt-1"><path d="M13 2L4 10" stroke="#777" /><path d="M0 6v8h8z" fill="#777" /></Svg>
        <span className="mr-[12px] ml-[19px]"><X s={12} c="#999" /></span>
      </div>
      <div className="ml-[13px] flex h-[72px] w-[354px] shrink-0 items-start border-b border-[#b0b0b4] pt-[5px]">
        <div className="-mb-px flex h-[67px] w-[102px] flex-col items-center border-b-2 border-[#4d7fd8] font-bold text-[#4d84e8]">
          <Svg w={28} h={28}><path d="M0 1h20v8q-9 0-10 12H0z" fill="#74a0f2" /><circle cx="18.500" cy="18" r="9" fill="#4a80e4" /></Svg>
          <span className="leading-6">预设形状</span>
        </div>
        <div className="ml-[22px] flex w-[102px] flex-col items-center">
          <Svg w={30} h={28}><path d="M11 3l11 8-3 5-8 4-1 6H3L0 11z" fill="#ccd4e6" /><path d="M14 28a5 5 0 010-10 6 6 0 0110 0 5 5 0 012 10z" fill="#b3bdd4" /></Svg>
          <span className="leading-6">在线形状</span>
        </div>
        <div className="ml-[22px] flex w-[102px] flex-col items-center">
          <Svg w={28} h={28}><circle cx="14" cy="15" r="13" fill="#b3bdd4" /><path d="M14 7v9h8" stroke="#eef1f8" strokeWidth="2.500" /></Svg>
          <span className="leading-6">最近使用</span>
        </div>
      </div>
      <div className="flex h-[41px] shrink-0 items-center pl-[13px]">类型</div>
      <div className="ml-[13px] flex h-[33px] w-[358px] shrink-0 items-center justify-between border border-[#cfd2d8] pl-[10px]">
        <span className="-mt-[3px]">全部形状</span>
        <Svg w={10} h={10} className="mt-[18px] mr-[3px]"><path d="M10 0v10H0z" fill="#7da5e0" /></Svg>
      </div>
      <SectionHead label="线条" className="h-[41px] shrink-0" />
      <div className={`${ROW} mt-[2px]`}>
        <S fill={false}><path d="M5 5l40 40" /></S>
        <S fill={false}><path d="M5 5l36 36" /><Arrow d="M45 45l-17-8 8-1 1-8z" /></S>
        <S fill={false}><path d="M8 8l34 34" /><Arrow d="M46 46l-17-8 8-1 1-8zM2 2l17 6-8 2-1 8z" /></S>
        <S fill={false}><path d="M3 9h22v31h23" /></S>
        <S fill={false}><path d="M1 8h22v31h20" /><Arrow d="M41 32l8 7-8 7z" /></S>
      </div>
      <div className={ROW}>
        <S fill={false}><path d="M7 8h17v31h18" /><Arrow d="M41 32l8 7-8 7zM9 1L1 8l8 7z" /></S>
        <S fill={false}><path d="M10 7h22c12 0 12 15 0 15-28 0-28 19-10 19h20" /></S>
        <S fill={false}><path d="M6 7h22c12 0 12 15 0 15-28 0-28 19-12 19h24" /><Arrow d="M37 34l8 7-8 7z" /></S>
        <S fill={false}><path d="M8 7h22c14 0 14 15 0 15-28 0-28 19-12 19h24" /><Arrow d="M40 34l8 7-8 7zM9 0L1 7l8 7z" /></S>
        <S fill={false}><path d="M43 14C38 0 14 2 20 18c3 7 12 11 12 18 0 13-24 13-26-4" /></S>
      </div>
      <div className={ROW}>
        <S><path d="M4 45V24c1-4 5-5 9-2 7 5 15-2 12-10-2-5-7-4-8-8 1-1 2-1 4-1h13l12 12v30z" /></S>
        <S fill={false}><path d="M17 10c5-8 25-8 24 4-1 8-14 9-20 12-8 4-9 8-6 12 6 8 24 5 24-3s-20-7-25 0c-3 4-3 7-3 11" /></S>
      </div>
      <SectionHead label="矩形" className="h-[30px] shrink-0" />
      <div className={`${ROW} mt-[6px]`}>
        <S><rect x="4" y="4" width="42" height="42" rx="2" /></S>
        <S><rect x="4" y="4" width="42" height="42" rx="7" /></S>
        <S><path d="M1 6h33l15 15v25H1z" /></S>
        <S><path d="M13 9h22l12 11v26H3V20z" /></S>
        <S><path d="M1 6h33l15 15v25H18L1 29z" /></S>
      </div>
      <div className={ROW}>
        <S><path d="M1 6h33l14 15v23H1z" /></S>
        <S><path d="M1 6h43v5h4v33H1z" /></S>
        <S><path d="M1 6h47v38H1z" /></S>
        <S><path d="M1 6h47v33h-4v5H1z" /></S>
      </div>
      <SectionHead label="基本形状" className="h-8 shrink-0" />
      <div className={`${ROW} mt-[5px]`}>
        <S>
          <path d="M1.500 1.500h47v47h-47zM28 11h14M28 17h14M28 23h14M7 29h35M7 35h35M7 41h35" />
          <text x="7" y="25" fontSize="22" fontWeight="700" fill="#7f9edb" stroke="none" fontFamily="Liberation Sans">A</text>
        </S>
        <S>
          <path d="M1.500 1.500h47v47h-47zM8 8v34M14 8v34M20 8v34M26 29v13M32 29v13M38 29v13" />
          <text x="26" y="25" fontSize="22" fontWeight="700" fill="#7f9edb" stroke="none" fontFamily="Liberation Sans">A</text>
        </S>
        <S><circle cx="25" cy="25" r="22" /></S>
        <S><path d="M25 3l22 43q0 1-2 1H5q-2 0-2-1z" /></S>
        <S><path d="M4 5l41 41H4z" /></S>
      </div>
      <div className={ROW}>
        <S><path d="M15 3h32L36 47H4z" /></S>
        <S><path d="M10 3h30l9 42H1z" /></S>
        <S><path d="M25 1l24 24-24 24L1 25z" /></S>
        <S><path d="M25 1l24 19-9 28H10L1 20z" /></S>
        <S><path d="M13 3h24l12 22-12 22H13L1 25z" /></S>
      </div>
      <div className={ROW}>
        <Num>7</Num>
        <Num>8</Num>
        <Num>10</Num>
        <Num>12</Num>
        <S><path d="M25 1v24H1C1 10 12 1 25 1z" /></S>
      </div>
    </div>
  );
}

/* ---------- status bar ---------- */

function StatusBar() {
  return (
    <div className="flex h-[13px] items-start overflow-hidden border-t border-[#cfcfd1] bg-[#dededf]">
      <Svg w={30} h={6} className="mt-[7px] ml-[138px]"><path d="M0 1h5v3H0zM7 2h8v2H7z" fill="#999" /><path d="M25 0v6" stroke="#999" /></Svg>
      <div className="mt-1 ml-[1172px] flex h-3 w-[55px] justify-center bg-[#c5e1b6] pt-1"><div className="h-2 w-[15px] border-x-[5px] border-t-2 border-[#666] bg-[#ddd]" /></div>
      <div className="mt-2 ml-[20px] h-2 w-[14px] border-x-[5px] border-t-2 border-[#666] bg-[#ddd]" />
      <div className="mt-2 ml-[41px] h-2 w-[15px] bg-[#666]" />
      <div className="mt-2 ml-[48px] h-2 w-[14px] bg-[#666]" />
      <span className="mt-px ml-[39px] w-[60px] text-[18px] leading-6 whitespace-nowrap text-[#444]">100 %</span>
      <div className="mt-[3px] ml-[116px] size-[20px] rounded-full border border-[#999] bg-[#f4f4f4]" />
      <div className="mt-[10px] ml-[108px] h-4 w-[2px] bg-[#666]" />
    </div>
  );
}

/* ---------- taskbar ---------- */

function VsCode() {
  return (
    <Svg w={29} h={30} className="mt-[2px]">
      <path d="M22 0l7 2v25l-7 3L0 24l22 2z" fill="#0078d0" />
      <path d="M2 9.500l13 11V8L2 18.500" stroke="#0078d0" strokeWidth="2.600" strokeLinejoin="round" />
    </Svg>
  );
}

function Taskbar() {
  return (
    <div className="flex h-[50px] bg-black">
      <Cell className="w-[60px]"><Svg w={20} h={20}><path d="M0 3l8.500-1.200V9.500H0zM9.500 1.600L20 0v9.500H9.500zM0 10.500h8.500v7.700L0 17zM9.500 10.500H20V20L9.500 18.400z" fill="#fff" /></Svg></Cell>
      <div className="flex w-[430px] items-center border-t border-[#bbb] bg-[#f2f2f2]">
        <div className="ml-3 size-[26px] rounded-full border-[3.500px] border-black" />
        <span className="ml-3 flex-1 text-[19px] whitespace-nowrap text-[#2b2b2b]">在这里输入你要搜索的内容</span>
        <Svg w={14} h={20} className="mr-[19px]"><rect x="4" y=".7" width="6" height="12" rx="1.500" stroke="#222" strokeWidth="1.400" /><path d="M.7 9v3q0 4 4 4h4.600q4 0 4-4V9M7 16v3M3 19.300h8" stroke="#222" strokeWidth="1.400" /></Svg>
      </div>
      <Cell className="ml-[3px] w-[62px]">
        <Svg w={30} h={30}>
          <path d="M14 3C4 3 0 12 1 19c2 4 5-2 8 1s1 8 7 8c8 0 12-8 11-15-1-6-6-10-13-10z" fill="#cfe3f2" />
          <circle cx="6" cy="16" r="2.200" fill="#e0483a" /><circle cx="10" cy="11" r="2.200" fill="#55b04a" /><circle cx="16" cy="8" r="2.500" fill="#f2c230" /><circle cx="12" cy="17" r="2" fill="#111" />
          <path d="M24 6l-7 22" stroke="#d9822f" strokeWidth="2.500" /><path d="M22 1l6 1-1 5-4 2-2-3z" fill="#a77b4d" />
        </Svg>
      </Cell>
      <Cell className="w-[62px]"><VsCode /></Cell>
      <Cell className="w-[62px]">
        <Svg w={28} h={28}>
          <circle cx="14" cy="14" r="14" fill="#f7c92f" />
          <path d="M14 28A14 14 0 011.900 7l6 10.500L17 20z" fill="#2c9e50" />
          <path d="M1.900 7A14 14 0 0126.100 7H14L8 15z" fill="#d8453a" />
          <circle cx="14" cy="14" r="6.300" fill="#fff" /><circle cx="14" cy="14" r="5" fill="#4a86e8" />
        </Svg>
      </Cell>
      <Cell className="ml-[6px] w-[51px] border-b-[3px] border-[#76b9ed]"><VsCode /></Cell>
      <Cell className="ml-[6px] w-[61px] border-b-[3px] border-[#76b9ed] bg-[#333]">
        <Svg w={28} h={22} className="mt-[2px]"><path d="M0 0h28v22H0z" fill="#e8e8e8" /><path d="M0 0h28v3H0z" fill="#999" /><path d="M7 4h11v15H7z" fill="#0a78d6" /><path d="M20 6h7M20 9h7M20 12h7M20 15h4M1 6h5M1 9h5M1 12h3" stroke="#999" /></Svg>
      </Cell>
      <Cell className="ml-[6px] w-[51px] border-b-[3px] border-[#76b9ed] pr-[2px]">
        <Svg w={28} h={24}><path d="M0 1h10l3 3h15v18H0z" fill="#ffe08a" /><path d="M0 1h10l3 3H0z" fill="#f5c431" /><path d="M5 23v-8q0-3 3-3h12q3 0 3 3v8h-5v-6h-8v6z" fill="#3aa7df" /></Svg>
      </Cell>
      <div className="flex-1" />
      <Cell className="w-9"><Svg w={20} h={20} className="-mt-1"><rect x="1" y="1" width="17" height="17" rx="2" transform="rotate(-6 10 10)" fill="#ee5a24" /><path d="M15 5.500q-9-1.500-9 1.500t5 2.500q5 1 3 4-3 2-9 .5" stroke="#fff" strokeWidth="2.600" /></Svg></Cell>
      <Cell className="w-9"><Svg w={16} h={10}><path d="M1 9l7-8 7 8" stroke="#fff" strokeWidth="1.500" /></Svg></Cell>
      <Cell className="w-6"><Svg w={19} h={20}><circle cx="12" cy="5" r="4.500" fill="#3ba0dc" /><circle cx="13" cy="13" r="5.500" fill="#2f8fd0" /><path d="M7 3c9-1 10 9 1 9H5l-2 3V11C-1 9 0 3 7 3z" fill="#f6c636" /></Svg></Cell>
      <Cell className="w-[35px]"><Svg w={20} h={13}><path d="M4.500 3.500h13v8h-13zM18 6h2v3h-2" stroke="#fff" fill="#fff" /><path d="M0 3h5v3a2 2 0 01-4 0zM1.500 0v3M4 0v3M2.500 8v5" stroke="#fff" fill="#000" /></Svg></Cell>
      <Cell className="w-[26px]"><Svg w={20} h={18}><path d="M3 2.500h16.500v11H2M1 .5h3v4H1zM2.500 5v12h5" stroke="#fff" /><path d="M14.500 8l5 10h-10z" fill="#fcc419" /><path d="M14.500 11v4M14.500 16v1" stroke="#000" strokeWidth="1.200" /></Svg></Cell>
      <Cell className="w-8"><Svg w={19} h={14}><path d="M1 4.500h3L7.500 1v12L4 9.500H1zM11 3.500l7 7M18 3.500l-7 7" stroke="#fff" strokeWidth="1.200" /></Svg></Cell>
      <div className="flex w-[94px] flex-col items-center justify-center pt-[2px] text-[15.500px] leading-[23px] whitespace-nowrap text-white"><span>17:00</span><span>2018/10/23</span></div>
      <Cell className="w-[59px] pr-[7px]">
        <div className="relative">
          <Svg w={20} h={20}><path d="M0 0h20v15H8l-3 4v-4H0z" fill="#fff" /><path d="M3 4h13M3 7.500h13M3 11h13" stroke="#000" strokeWidth="1.300" /></Svg>
          <div className="absolute top-[9px] left-[9px] flex size-5 items-center justify-center rounded-full border border-[#888] bg-[#222] text-[13px] font-bold text-white">1</div>
        </div>
      </Cell>
      <div className="mr-[5px] w-px bg-[#555]" />
    </div>
  );
}

/* ---------- floating widgets ---------- */

function ImeBar() {
  return (
    <div className="absolute top-[753px] left-[1680px] flex h-9 w-[236px] items-center border border-[#b8cad8] bg-[#fcfdfe] pl-[31px] shadow-sm">
      <div className="absolute -top-[6px] -left-[10px]">
        <Svg w={42} h={42}>
          <rect x="3" y="3" width="36" height="36" rx="4" transform="rotate(-9 21 21)" fill="#2fb512" />
          <path d="M33 10C20 7 8 10 9 16s24 3 23 10-14 7-24 4" stroke="#fff" strokeWidth="5.500" />
        </Svg>
      </div>
      <span className="ml-[10px] text-[21px] font-bold text-[#3d4252]">英</span>
      <Svg w={20} h={21} className="ml-[13px]"><path d="M13 0q9 8 5 15-6 9-18 2 15 0 13-17z" fill="#3d4252" /></Svg>
      <Svg w={15} h={16} className="ml-[14px]"><circle cx="4" cy="4" r="3" fill="#3d4252" /><path d="M10 8h4q1 5-4 8-1 0-1-1 2-2 1-3z" fill="#3d4252" /></Svg>
      <Svg w={24} h={18} className="ml-[14px]"><rect x="1" y="1" width="22" height="16" rx="2" stroke="#3d4252" strokeWidth="2" /><path d="M4 5h16M4 9h16" stroke="#3d4252" strokeWidth="2" strokeDasharray="2.500 1.500" /><path d="M6 13h12" stroke="#3d4252" strokeWidth="2" /></Svg>
      <Svg w={18} h={20} className="ml-[12px]"><circle cx="9" cy="5" r="4.500" fill="#bcd0cb" /><path d="M4 10h10q4 3 4 6h-3v4H3v-4H0q0-3 4-6z" fill="#bcd0cb" /></Svg>
      <Svg w={22} h={22} className="ml-[13px]"><path d="M15 1q-6 1-5 8L1 17q-2 3 1 5 2 0 3-1l8-8q8 1 9-6l-5 2-3-3z" fill="#3d4252" /></Svg>
    </div>
  );
}

export default function App() {
  return (
    <div className={`relative h-[1080px] w-[1920px] overflow-hidden bg-[#e2e2e4] ${UI}`}>
      <TitleBar />
      <BrandBar />
      <MenuTabs />
      <Ribbon />
      <DocTabs />
      <div className="flex h-[770px]">
        <div className="w-[1464px] shrink-0">
          <FormulaBar />
          <Sheet />
          <SheetTabs />
        </div>
        <Rail />
        <ShapesPane />
        <div className="w-[10px] bg-[#dfe0e2] pt-[361px]">
          <div className="flex h-[100px] items-center justify-center bg-[#5aa92f]"><Svg w={5} h={8}><path d="M0 0v8l5-4z" fill="#fff" /></Svg></div>
        </div>
      </div>
      <StatusBar />
      <Taskbar />
      <div className="absolute top-[400px] left-[1894px] h-[182px] w-3 rounded-full bg-[#cfd0d2]" />
      <ImeBar />
      <div className="absolute top-[246px] left-[1901px] flex size-12 items-center rounded-full border-[3px] border-[#e4e4e4] bg-[#35c95a] pl-px text-[13px] font-bold text-white shadow-[0_1px_4px_rgba(0,0,0,0.6)] ring-1 ring-[#2a6a3a] ring-inset">47</div>
      <div className="absolute top-[947px] left-[1907px] flex h-[74px] w-[14px] flex-col items-center rounded-l bg-[#474b5c] pt-2">
        <div className="h-[38px] w-[5px] bg-[repeating-linear-gradient(#2a2d38_0_2px,#474b5c_2px_3px)]" />
        <div className="h-[20px] w-[5px] bg-[repeating-linear-gradient(#5fd08f_0_2px,#474b5c_2px_3px)]" />
      </div>
    </div>
  );
}
